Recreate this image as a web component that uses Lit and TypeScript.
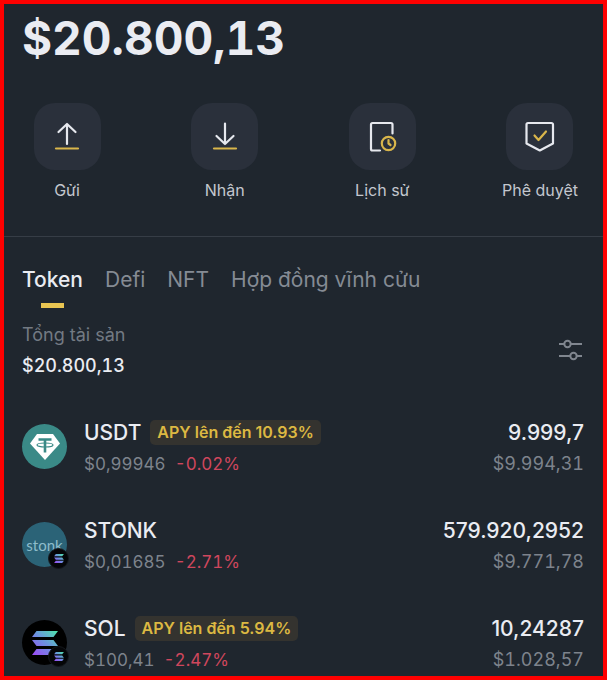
import { LitElement, html, css, svg, nothing } from "lit";
import { customElement, property } from "lit/decorators.js";

interface Asset {
  symbol: string;
  apy?: string;
  price: string;
  change: string;
  amount: string;
  value: string;
  logo: "usdt" | "stonk" | "sol";
  onSolana: boolean;
}

const ASSETS: Asset[] = [
  { symbol: "USDT", apy: "APY lên đến 10.93%", price: "$0,99946", change: "-0.02%", amount: "9.999,7", value: "$9.994,31", logo: "usdt", onSolana: false },
  { symbol: "STONK", price: "$0,01685", change: "-2.71%", amount: "579.920,2952", value: "$9.771,78", logo: "stonk", onSolana: true },
  { symbol: "SOL", apy: "APY lên đến 5.94%", price: "$100,41", change: "-2.47%", amount: "10,24287", value: "$1.028,57", logo: "sol", onSolana: true },
];

const ACTIONS = [
  {
    label: "Gửi",
    icon: svg`<path class="line" d="M18 27V7M9.500 15L18 7l8.500 8"/><path class="accent" d="M7 31.500h22"/>`,
  },
  {
    label: "Nhận",
    icon: svg`<path class="line" d="M18 6.500V27M9.500 19L18 27l8.500-8"/><path class="accent" d="M7 31.500h22"/>`,
  },
  {
    label: "Lịch sử",
    icon: svg`<path class="line" d="M16 33.500H8.500A1.500 1.500 0 0 1 7 32V7.500A1.500 1.500 0 0 1 8.500 6H27a1.500 1.500 0 0 1 1.500 1.500v9"/><circle class="accent" cx="24.500" cy="26.500" r="6.700"/><path class="accent" d="M24.500 23v3.500l2 1.500"/>`,
  },
  {
    label: "Phê duyệt",
    icon: svg`<path class="line" d="M6 6h23.500A1.500 1.500 0 0 1 31 7.500v19L17.800 33.500 4.500 26.500v-19A1.500 1.500 0 0 1 6 6z"/><path class="accent" d="M12.500 18.500l4 4.500 7.500-8.500"/>`,
  },
];

const TABS = ["Token", "Defi", "NFT", "Hợp đồng vĩnh cửu"];

const solanaMark = (id: string) => svg`
  <defs>
    <linearGradient id=${id} gradientUnits="userSpaceOnUse" x1="2" y1="24" x2="24" y2="0">
      <stop offset="0" stop-color="#9a4df5"/>
      <stop offset="0.5" stop-color="#6d8fe0"/>
      <stop offset="1" stop-color="#4fe0ae"/>
    </linearGradient>
  </defs>
  <g fill="url(#${id})">
    <path d="M4.500 0H26l-4.500 6H0z"/>
    <path d="M0 9h21.500l4.500 6H4.500z"/>
    <path d="M4.500 18H26l-4.500 6H0z"/>
  </g>`;

@customElement("coin-logo")
export class CoinLogo extends LitElement {
  @property() logo: Asset["logo"] = "usdt";
  @property({ type: Boolean }) solana = false;

  static styles = css`
    :host {
      display: block;
      position: relative;
      flex: none;
      width: 45px;
      height: 45px;
    }
    .disc {
      display: flex;
      align-items: center;
      justify-content: center;
      width: 100%;
      height: 100%;
      border-radius: 50%;
      overflow: hidden;
    }
    .usdt {
      background: #3a8a87;
    }
    .stonk {
      background: #2b6377;
      color: #8dbccb;
      font: 400 15px/20px Lato, sans-serif;
    }
    .sol {
      background: #000;
    }
    .chain {
      position: absolute;
      right: -2px;
      bottom: -2px;
      display: flex;
      align-items: center;
      justify-content: center;
      box-sizing: border-box;
      width: 21px;
      height: 21px;
      border-radius: 50%;
      background: #050608;
      border: 1px solid #14181d;
    }
  `;

  private face() {
    if (this.logo === "usdt") {
      return html`<svg width="32" height="28" viewBox="0 0 32 28" aria-hidden="true">
        <path d="M8 1h16l7 9.500L16 27 1 10.500z" fill="#fff" />
        <g fill="none" stroke="#3a8a87">
          <path d="M9.500 6.500h13M16 6.500v13" stroke-width="2.600" />
          <ellipse cx="16" cy="12" rx="8" ry="2" stroke-width="1.200" />
        </g>
      </svg>`;
    }
    if (this.logo === "sol") {
      return html`<svg width="26" height="24" viewBox="0 0 26 24" aria-hidden="true">${solanaMark("coin")}</svg>`;
    }
    return html`stonk`;
  }

  render() {
    return html`<div class="disc ${this.logo}">${this.face()}</div>
      ${this.solana
        ? html`<span class="chain"><svg width="10" height="9" viewBox="0 0 26 24" aria-hidden="true">${solanaMark("chain")}</svg></span>`
        : nothing}`;
  }
}

@customElement("app-root")
export class AppRoot extends LitElement {
  static styles = css`
    :host {
      display: block;
      box-sizing: border-box;
      min-height: 100vh;
      border: 4px solid #fe0000;
      background: #1f262e;
      color: #eaecf2;
      font-family: Inter, sans-serif;
    }
    button {
      padding: 0;
      border: 0;
      background: none;
      color: inherit;
      font: inherit;
      cursor: pointer;
    }
    .balance,
    .total,
    .minor {
      font-variant-numeric: tabular-nums;
    }
    .balance {
      margin: 0;
      padding: 9px 18px 0;
      font-size: 46px;
      line-height: 50px;
      font-weight: 700;
    }
    .actions {
      display: flex;
      justify-content: space-between;
      padding: 40px 25px 34px;
      border-bottom: 1px solid #363d46;
    }
    .action {
      display: flex;
      flex-direction: column;
      align-items: center;
      gap: 8px;
      width: 76px;
      color: #c3c7ce;
      font-size: 16px;
      line-height: 24px;
      white-space: nowrap;
    }
    .tile {
      display: flex;
      align-items: center;
      justify-content: center;
      width: 67px;
      height: 67px;
      border-radius: 21px;
      background: #2a303b;
    }
    .line,
    .accent {
      fill: none;
      stroke: #e6e8ee;
      stroke-width: 2.200;
      stroke-linecap: round;
      stroke-linejoin: round;
    }
    .accent {
      stroke: #d9b64b;
    }
    .tabs {
      display: flex;
      gap: 22px;
      padding: 28px 18px 0;
    }
    .tab {
      display: flex;
      flex-direction: column;
      align-items: center;
      gap: 8px;
      color: #858b94;
      font-size: 21px;
      line-height: 30px;
      white-space: nowrap;
    }
    .tab[aria-selected="true"] {
      color: #eaecf2;
      font-weight: 500;
    }
    .tab[aria-selected="true"]::after {
      content: "";
      width: 23px;
      height: 5px;
      background: #e9c552;
    }
    .summary {
      display: flex;
      align-items: center;
      justify-content: space-between;
      padding: 11px 19px 0 18px;
      font-size: 18px;
      line-height: 31px;
    }
    .caption {
      color: #737a83;
    }
    .total {
      font-weight: 500;
    }
    .filter {
      display: flex;
    }
    .assets {
      display: flex;
      flex-direction: column;
      gap: 36px;
      margin: 0;
      padding: 36px 19px 0 18px;
      list-style: none;
    }
    .asset {
      display: flex;
      align-items: flex-start;
      gap: 17px;
    }
    coin-logo {
      margin-top: 7px;
    }
    .body {
      flex: 1;
    }
    .row {
      display: flex;
      align-items: center;
      justify-content: space-between;
      height: 31px;
      font-size: 21px;
      font-weight: 500;
    }
    .row.minor {
      color: #7d838c;
      font-size: 18px;
      font-weight: 400;
    }
    .group {
      display: flex;
      align-items: center;
      gap: 9px;
    }
    .minor .group {
      font-size: 17px;
    }
    .apy {
      padding: 0 7px;
      border-radius: 5px;
      background: #34332f;
      color: #dcb842;
      font-size: 16px;
      line-height: 25px;
      font-weight: 600;
    }
    .change {
      color: #cf475d;
    }
  `;

  render() {
    return html`
      <h1 class="balance">$20.800,13</h1>
      <nav class="actions">
        ${ACTIONS.map(
          (a) => html`<button class="action">
            <span class="tile"><svg width="36" height="36" viewBox="0 2 36 36" aria-hidden="true">${a.icon}</svg></span>
            <span>${a.label}</span>
          </button>`
        )}
      </nav>
      <div class="tabs" role="tablist">
        ${TABS.map((t, i) => html`<button class="tab" role="tab" aria-selected=${i === 0 ? "true" : "false"}>${t}</button>`)}
      </div>
      <section class="summary">
        <div>
          <div class="caption">Tổng tài sản</div>
          <div class="total">$20.800,13</div>
        </div>
        <button class="filter" aria-label="Bộ lọc">
          <svg width="26" height="22" viewBox="0 0 26 22" fill="none" stroke="#80868f" stroke-width="2" aria-hidden="true">
            <path d="M1 5h5M13 5h11M1 17h11M19 17h5" />
            <circle cx="9.500" cy="5" r="3.200" />
            <circle cx="15.500" cy="17" r="3.200" />
          </svg>
        </button>
      </section>
      <ul class="assets">
        ${ASSETS.map(
          (a) => html`<li class="asset">
            <coin-logo .logo=${a.logo} ?solana=${a.onSolana}></coin-logo>
            <div class="body">
              <div class="row">
                <div class="group"><span>${a.symbol}</span>${a.apy ? html`<span class="apy">${a.apy}</span>` : nothing}</div>
                <span>${a.amount}</span>
              </div>
              <div class="row minor">
                <div class="group"><span>${a.price}</span><span class="change">${a.change}</span></div>
                <span>${a.value}</span>
              </div>
            </div>
          </li>`
        )}
      </ul>
    `;
  }
}
